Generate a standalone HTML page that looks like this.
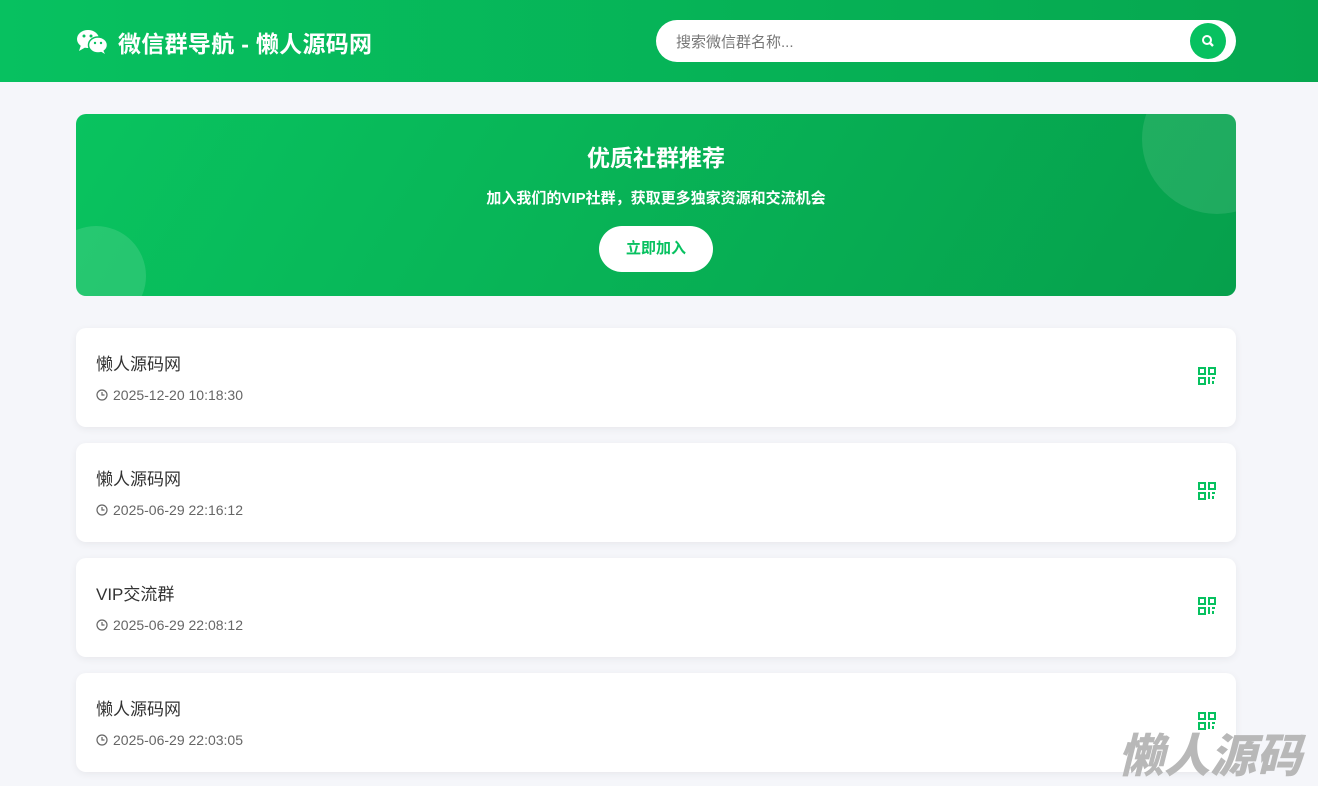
<!DOCTYPE html>
<html><head><meta charset="utf-8"><style>
*{margin:0;padding:0;box-sizing:border-box}
body{width:1318px;height:784px;overflow:hidden;background:#f5f6fa;font-family:"Liberation Sans","Noto Sans CJK SC",sans-serif;position:relative}
.hdr{height:82px;background:linear-gradient(90deg,#07c160,#06a74f);position:relative}
.logo{position:absolute;left:76px;top:25px;color:#fff;font-size:23px;font-weight:bold;display:flex;align-items:center;gap:10px;letter-spacing:0.3px}
.search{position:absolute;left:656px;top:20px;width:580px;height:42px;background:#fff;border-radius:21px}
.search span{position:absolute;left:20px;top:11px;font-size:15px;color:#777}
.sbtn{position:absolute;right:10px;top:3px;width:36px;height:36px;border-radius:50%;background:#07c160}
.banner{position:absolute;left:76px;top:114px;width:1160px;height:182px;border-radius:10px;background:linear-gradient(120deg,#09c35f,#06a04c);overflow:hidden;text-align:center;color:#fff}
.c1{position:absolute;right:-56px;top:-50px;width:150px;height:150px;border-radius:50%;background:rgba(255,255,255,.1)}
.c2{position:absolute;left:-30px;top:112px;width:100px;height:100px;border-radius:50%;background:rgba(255,255,255,.12)}
.banner h2{font-size:23px;margin-top:25px}
.banner p{font-size:15px;margin-top:14px;font-weight:bold}
.join{display:inline-block;margin-top:18px;width:114px;height:46px;line-height:46px;border-radius:23px;background:#fff;color:#07c160;font-weight:bold;font-size:15px}
.card{position:absolute;left:76px;width:1160px;height:99px;background:#fff;border-radius:10px;box-shadow:0 2px 8px rgba(0,0,0,.06)}
.card .t{position:absolute;left:20px;top:22px;font-size:17px;color:#333}
.card .d{position:absolute;left:20px;top:59px;font-size:14px;color:#666;display:flex;align-items:center;gap:5px}
.card svg.q{position:absolute;right:20px;top:39px}
.wm{position:absolute;left:1118px;top:720px;font-size:46px;font-weight:900;font-style:italic;color:#b8b8b8}
</style></head><body>
<div class="hdr">
<div class="logo"><svg width="32" height="26" viewBox="0 0 32 26"><ellipse cx="12" cy="10" rx="11" ry="9" fill="#fff"/><path d="M5 16 L3 22 L10 18Z" fill="#fff"/><ellipse cx="22" cy="16" rx="9.5" ry="8" stroke="#07c160" stroke-width="1.5" fill="#fff"/><path d="M27 21 L29 25 L24 22Z" fill="#fff"/><circle cx="8" cy="7" r="1.5" fill="#07c160"/><circle cx="15" cy="7" r="1.5" fill="#07c160"/><circle cx="19" cy="14" r="1.2" fill="#07c160"/><circle cx="25" cy="14" r="1.2" fill="#07c160"/></svg>微信群导航 - 懒人源码网</div>
<div class="search"><span>搜索微信群名称...</span><div class="sbtn"><svg width="36" height="36" viewBox="0 0 36 36"><circle cx="17" cy="17" r="4" stroke="#fff" stroke-width="2" fill="none"/><path d="M20 20l3 3" stroke="#fff" stroke-width="2.4"/></svg></div></div>
</div>
<div class="banner"><div class="c1"></div><div class="c2"></div>
<h2>优质社群推荐</h2><p>加入我们的VIP社群，获取更多独家资源和交流机会</p><span class="join">立即加入</span></div>

<div class="card" style="top:328px"><div class="t">懒人源码网</div><div class="d"><svg width="12" height="12" viewBox="0 0 12 12"><circle cx="6" cy="6" r="5" stroke="#666" stroke-width="1.2" fill="none"/><path d="M6 3v3h2.5" stroke="#666" stroke-width="1.2" fill="none"/></svg>2025-12-20 10:18:30</div><svg class="q" width="18" height="18" viewBox="0 0 18 18" fill="none" stroke="#07c160" stroke-width="2"><rect x="1" y="1" width="6" height="6"/><rect x="11" y="1" width="6" height="6"/><rect x="1" y="11" width="6" height="6"/><path d="M11 10v7M14 11h3M15 14v3"/></svg></div>
<div class="card" style="top:443px"><div class="t">懒人源码网</div><div class="d"><svg width="12" height="12" viewBox="0 0 12 12"><circle cx="6" cy="6" r="5" stroke="#666" stroke-width="1.2" fill="none"/><path d="M6 3v3h2.5" stroke="#666" stroke-width="1.2" fill="none"/></svg>2025-06-29 22:16:12</div><svg class="q" width="18" height="18" viewBox="0 0 18 18" fill="none" stroke="#07c160" stroke-width="2"><rect x="1" y="1" width="6" height="6"/><rect x="11" y="1" width="6" height="6"/><rect x="1" y="11" width="6" height="6"/><path d="M11 10v7M14 11h3M15 14v3"/></svg></div>
<div class="card" style="top:558px"><div class="t">VIP交流群</div><div class="d"><svg width="12" height="12" viewBox="0 0 12 12"><circle cx="6" cy="6" r="5" stroke="#666" stroke-width="1.2" fill="none"/><path d="M6 3v3h2.5" stroke="#666" stroke-width="1.2" fill="none"/></svg>2025-06-29 22:08:12</div><svg class="q" width="18" height="18" viewBox="0 0 18 18" fill="none" stroke="#07c160" stroke-width="2"><rect x="1" y="1" width="6" height="6"/><rect x="11" y="1" width="6" height="6"/><rect x="1" y="11" width="6" height="6"/><path d="M11 10v7M14 11h3M15 14v3"/></svg></div>
<div class="card" style="top:673px"><div class="t">懒人源码网</div><div class="d"><svg width="12" height="12" viewBox="0 0 12 12"><circle cx="6" cy="6" r="5" stroke="#666" stroke-width="1.2" fill="none"/><path d="M6 3v3h2.5" stroke="#666" stroke-width="1.2" fill="none"/></svg>2025-06-29 22:03:05</div><svg class="q" width="18" height="18" viewBox="0 0 18 18" fill="none" stroke="#07c160" stroke-width="2"><rect x="1" y="1" width="6" height="6"/><rect x="11" y="1" width="6" height="6"/><rect x="1" y="11" width="6" height="6"/><path d="M11 10v7M14 11h3M15 14v3"/></svg></div>
<div class="wm">懒人源码</div>
</body></html>
